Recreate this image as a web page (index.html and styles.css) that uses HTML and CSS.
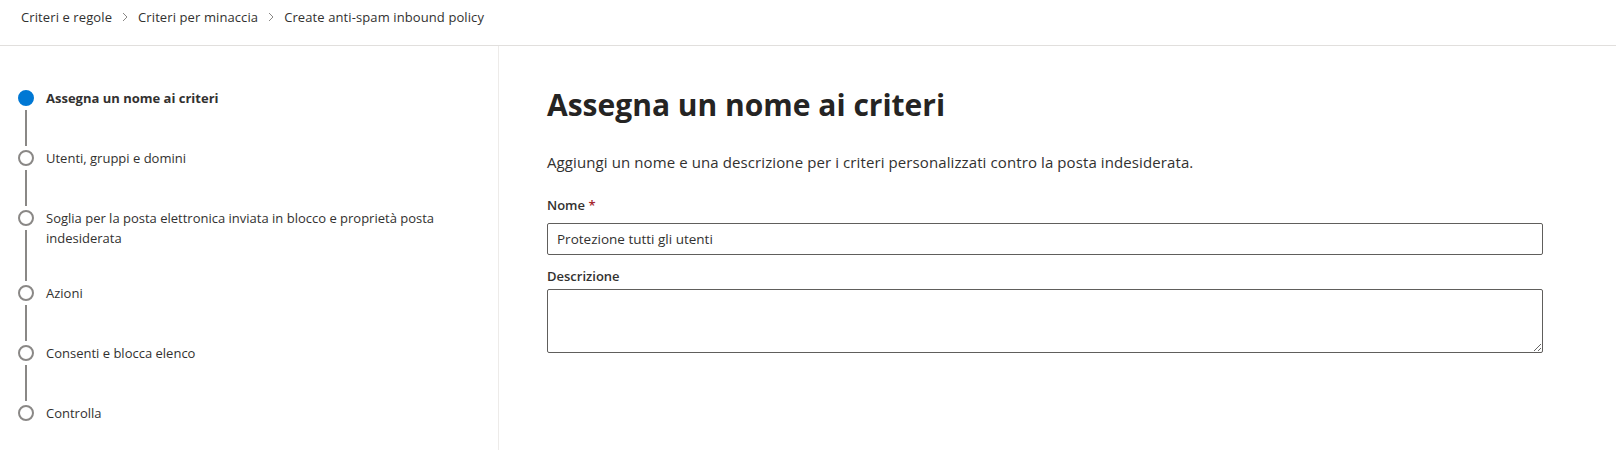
FILE: index.html
```html
<!DOCTYPE html>
<html lang="it">

<head>
   <meta charset="UTF-8">
   <meta name="viewport" content="width=device-width, initial-scale=1.0">
   <title>Create anti-spam inbound policy</title>
   <link rel="stylesheet" href="styles.css">
</head>

<body>
   <div class="topbar">
      <nav class="crumbs">
         <span class="crumb">Criteri e regole</span>
         <svg class="chev" width="6" height="10" viewBox="0 0 6 10"><polyline points="1,1 5,5 1,9" fill="none" stroke="#8a8886" stroke-width="1"/></svg>
         <span class="crumb">Criteri per minaccia</span>
         <svg class="chev" width="6" height="10" viewBox="0 0 6 10"><polyline points="1,1 5,5 1,9" fill="none" stroke="#8a8886" stroke-width="1"/></svg>
         <span class="crumb current">Create anti-spam inbound policy</span>
      </nav>
   </div>

   <div class="wizard">
      <div class="steps">
         <div class="step">
            <div class="marker"><span class="dot active"></span><span class="line"></span></div>
            <div class="label bold">Assegna un nome ai criteri</div>
         </div>
         <div class="step">
            <div class="marker"><span class="dot"></span><span class="line"></span></div>
            <div class="label">Utenti, gruppi e domini</div>
         </div>
         <div class="step tall">
            <div class="marker"><span class="dot"></span><span class="line"></span></div>
            <div class="label">Soglia per la posta elettronica inviata in blocco e proprietà posta indesiderata</div>
         </div>
         <div class="step">
            <div class="marker"><span class="dot"></span><span class="line"></span></div>
            <div class="label">Azioni</div>
         </div>
         <div class="step">
            <div class="marker"><span class="dot"></span><span class="line"></span></div>
            <div class="label">Consenti e blocca elenco</div>
         </div>
         <div class="step last">
            <div class="marker"><span class="dot"></span></div>
            <div class="label">Controlla</div>
         </div>
      </div>

      <div class="content">
         <h1>Assegna un nome ai criteri</h1>
         <p class="intro">Aggiungi un nome e una descrizione per i criteri personalizzati contro la posta indesiderata.</p>

         <div class="form">
            <label class="field-label first" for="name">Nome <span class="req">*</span></label>
            <input id="name" type="text" value="Protezione tutti gli utenti">

            <label class="field-label" for="desc">Descrizione</label>
            <textarea id="desc"></textarea>
         </div>
      </div>
   </div>
</body>
</html>
```

FILE: styles.css
```css
* {
   margin: 0;
   padding: 0;
   box-sizing: border-box;
}

body {
   font-family: "Open Sans", "Noto Sans", sans-serif;
   color: #323130;
   background: #fff;
   font-size: 14px;
}

.topbar {
   height: 46px;
   border-bottom: 1px solid #e1dfdd;
}

.crumbs {
   display: flex;
   align-items: center;
   padding: 7px 0 0 21px;
   height: 27px;
   font-size: 13px;
   letter-spacing: 0.1px;
   gap: 10px;
}

.crumb {
   color: #323130;
}

.chev {
   display: block;
}

.wizard {
   display: flex;
   height: 404px;
}

.steps {
   width: 499px;
   flex-shrink: 0;
   border-right: 1px solid #edebe9;
   padding: 42px 0 0 18px;
}

.step {
   display: flex;
   gap: 12px;
   min-height: 60px;
}

.step.tall {
   min-height: 75px;
}

.step.last {
   min-height: 20px;
}

.marker {
   display: flex;
   flex-direction: column;
   align-items: center;
   width: 16px;
   padding-top: 2px;
}

.dot {
   width: 16px;
   height: 16px;
   border-radius: 50%;
   border: 2px solid #8a8886;
   background: #fff;
}

.dot.active {
   background: #0078d4;
   border-color: #0078d4;
}

.line {
   flex: 1;
   width: 2px;
   background: #8a8886;
   margin: 4px 0 2px;
}

.label {
   line-height: 20px;
   font-size: 13px;
   width: 420px;
}

.label.bold {
   font-weight: 700;
}

.content {
   flex: 1;
   padding: 39px 0 0 48px;
}

h1 {
   font-size: 30px;
   line-height: 40px;
   font-weight: 700;
   color: #252423;
}

.intro {
   margin-top: 26px;
   font-size: 15px;
   letter-spacing: 0.1px;
   line-height: 22px;
}

.form {
   width: 996px;
   display: flex;
   flex-direction: column;
}

.field-label {
   font-weight: 600;
   font-size: 13px;
   line-height: 20px;
   margin: 11px 0 3px;
}

.field-label.first {
   margin: 22px 0 8px;
}

.req {
   color: #a4262c;
}

input,
textarea {
   font-family: inherit;
   font-size: 13.5px;
   color: #323130;
   border: 1px solid #605e5c;
   border-radius: 2px;
   outline: none;
}

input {
   height: 32px;
   padding: 0 9px;
}

textarea {
   height: 64px;
   padding: 6px 9px;
}
```
